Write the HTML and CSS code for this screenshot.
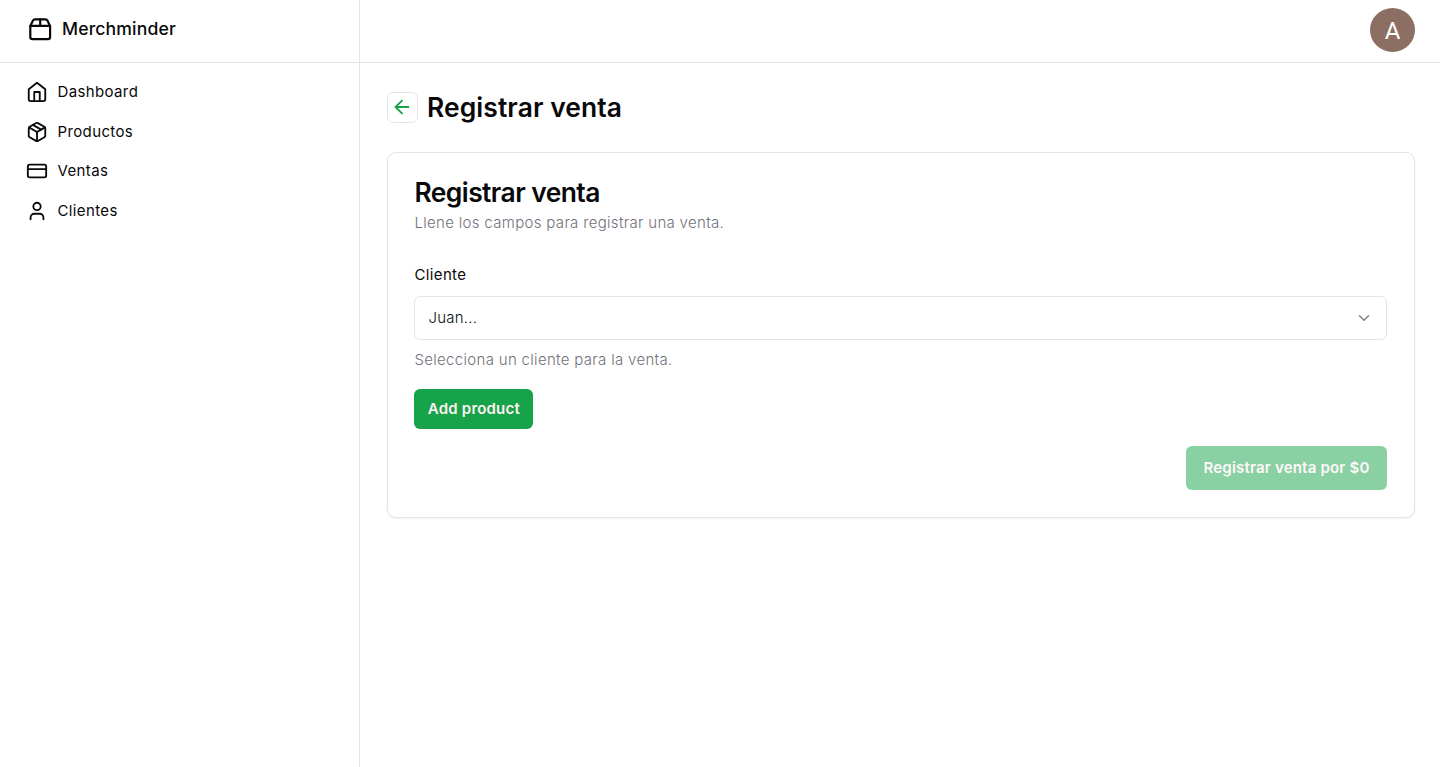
FILE: index.html
```html
<!DOCTYPE html>
<html lang="es">
<head>
<meta charset="utf-8">
<title>Merchminder</title>
<link rel="stylesheet" href="styles.css">
</head>
<body>
<div class="app">
  <aside class="sidebar">
    <div class="brand">
      <svg class="icon icon-brand" viewBox="0 0 24 24"><path d="M3 9h18v10a2 2 0 0 1-2 2H5a2 2 0 0 1-2-2V9Z"/><path d="m3 9 2.45-4.9A2 2 0 0 1 7.24 3h9.52a2 2 0 0 1 1.8 1.1L21 9"/><path d="M12 3v6"/></svg>
      <span class="brand-name">Merchminder</span>
    </div>
    <nav class="nav">
      <a class="nav-item"><svg class="icon icon-nav" viewBox="0 0 24 24"><path d="m3 9 9-7 9 7v11a2 2 0 0 1-2 2H5a2 2 0 0 1-2-2z"/><path d="M9 22V12h6v10"/></svg><span class="nav-label">Dashboard</span></a>
      <a class="nav-item"><svg class="icon icon-nav" viewBox="0 0 24 24"><path d="m7.5 4.27 9 5.15"/><path d="M21 8a2 2 0 0 0-1-1.73l-7-4a2 2 0 0 0-2 0l-7 4A2 2 0 0 0 3 8v8a2 2 0 0 0 1 1.73l7 4a2 2 0 0 0 2 0l7-4A2 2 0 0 0 21 16Z"/><path d="m3.3 7 8.7 5 8.7-5"/><path d="M12 22V12"/></svg><span class="nav-label">Productos</span></a>
      <a class="nav-item"><svg class="icon icon-nav" viewBox="0 0 24 24"><rect width="20" height="14" x="2" y="5" rx="2"/><path d="M2 10h20"/></svg><span class="nav-label">Ventas</span></a>
      <a class="nav-item"><svg class="icon icon-nav" viewBox="0 0 24 24"><path d="M19 21v-2a4 4 0 0 0-4-4H9a4 4 0 0 0-4 4v2"/><circle cx="12" cy="7" r="4"/></svg><span class="nav-label">Clientes</span></a>
    </nav>
  </aside>
  <div class="content">
    <header class="topbar"><div class="avatar">A</div></header>
    <main class="main">
      <div class="heading">
        <button class="back"><svg class="icon icon-back" viewBox="0 0 24 24"><path d="m12 19-7-7 7-7"/><path d="M19 12H5"/></svg></button>
        <h1 class="page-title">Registrar venta</h1>
      </div>
      <section class="card">
        <h2 class="card-title">Registrar venta</h2>
        <p class="card-text">Llene los campos para registrar una venta.</p>
        <label class="label">Cliente</label>
        <div class="select"><span>Juan...</span><svg class="icon icon-chevron" viewBox="0 0 24 24"><path d="m6 9 6 6 6-6"/></svg></div>
        <p class="hint">Selecciona un cliente para la venta.</p>
        <button class="button add">Add product</button>
        <button class="button submit">Registrar venta por $0</button>
      </section>
    </main>
  </div>
</div>
</body>
</html>
```
FILE: styles.css
```css
* { box-sizing: border-box; margin: 0; }
body { font-family: Inter, sans-serif; color: #09090b; background: #fff; font-size: 15px; }
.app { display: grid; grid-template-columns: 360px 1fr; height: 767px; }
.sidebar { border-right: 1px solid #e4e4e7; }
.brand { height: 63px; padding: 0 27px 4px; display: flex; align-items: center; gap: 8.6px; border-bottom: 1px solid #e4e4e7; }
.brand-name { font-size: 17.6px; font-weight: 500; line-height: 26px; padding-bottom: 1px; letter-spacing: 0.15px; }
.icon { display: block; flex: none; fill: none; stroke: currentColor; stroke-width: 2; stroke-linecap: round; stroke-linejoin: round; }
.icon-brand { width: 26.4px; height: 26.4px; }
.icon-nav { width: 22px; height: 22px; }
.nav { padding: 9.3px 26px; }
.nav-item { height: 39.6px; display: flex; align-items: center; gap: 9.5px; letter-spacing: 0.37px; }
.nav-label { padding-bottom: 0.6px; }
.topbar { height: 63px; border-bottom: 1px solid #e4e4e7; display: flex; justify-content: flex-end; padding: 8px 25px 0 0; }
.avatar { width: 45px; height: 44px; border-radius: 50%; background: #8d6e63; color: #fff; font: 24px/46px Roboto, sans-serif; text-align: center; }
.main { padding: 29px 25px 0 27px; }
.heading { display: flex; align-items: center; gap: 9px; height: 31px; }
.back { width: 31px; height: 31px; padding: 0 2px 1px 0; border: 1px solid #e4e4e7; border-radius: 6px; background: #fff; color: #16a34a; display: flex; align-items: center; justify-content: center; }
.icon-back { width: 22px; height: 22px; }
.page-title { font-size: 26.4px; font-weight: 600; line-height: 31px; letter-spacing: 0.1px; }
.card { margin-top: 29px; height: 366px; border: 1px solid #e4e4e7; border-radius: 9px; padding: 26px 27px 26px 26.4px; box-shadow: 0 1px 2px rgba(0,0,0,.06); display: flex; flex-direction: column; }
.card-title { font-size: 26.4px; font-weight: 600; line-height: 27px; letter-spacing: -0.54px; }
.card-text { margin-top: 6px; line-height: 22px; color: #71717a; font-weight: 300; letter-spacing: 0.32px; }
.label { margin-top: 32px; line-height: 18px; font-weight: 400; letter-spacing: 0.38px; }
.select { margin-top: 12px; height: 44px; flex: none; border: 1px solid #e4e4e7; border-radius: 6px; padding: 0 13px 1px; display: flex; align-items: center; justify-content: space-between; font-weight: 300; letter-spacing: 0.25px; }
.icon-chevron { width: 18px; height: 18px; opacity: .5; }
.hint { margin-top: 9px; line-height: 22px; color: #71717a; font-weight: 300; letter-spacing: 0.32px; }
.button { border: 0; padding: 0 0 1px; border-radius: 6px; background: #16a34a; color: #fff1f2; font: 600 15px Inter, sans-serif; letter-spacing: 0.2px; }
.add { width: 119px; height: 40px; margin-top: 18px; }
.submit { width: 201px; height: 44px; margin-top: 17px; align-self: flex-end; opacity: .5; }
```
